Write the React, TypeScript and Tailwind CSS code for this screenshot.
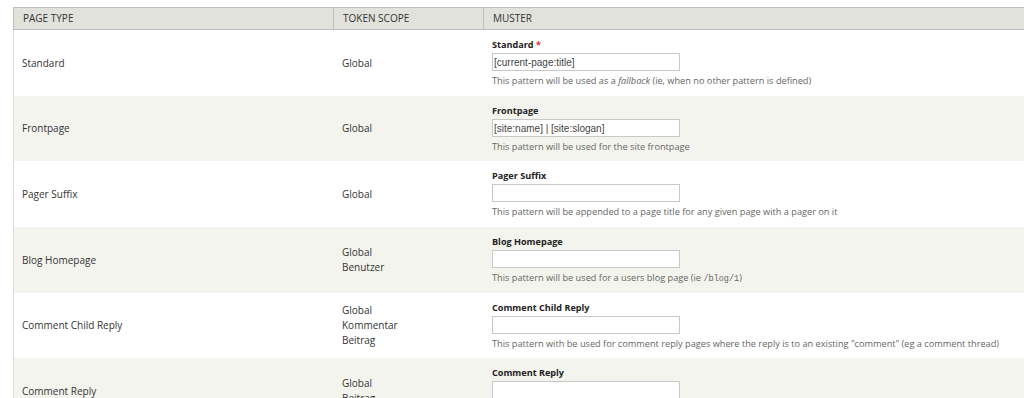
const rows = [
  {
    type: "Standard",
    scope: ["Global"],
    label: "Standard",
    required: true,
    value: "[current-page:title]",
    desc: (
      <>
        This pattern will be used as a <em>fallback</em> (ie, when no other pattern is defined)
      </>
    ),
    h: "h-[66px]",
  },
  {
    type: "Frontpage",
    scope: ["Global"],
    label: "Frontpage",
    value: "[site:name] | [site:slogan]",
    desc: <>This pattern will be used for the site frontpage</>,
    h: "h-[65px]",
  },
  {
    type: "Pager Suffix",
    scope: ["Global"],
    label: "Pager Suffix",
    value: "",
    desc: <>This pattern will be appended to a page title for any given page with a pager on it</>,
    h: "h-[66px]",
  },
  {
    type: "Blog Homepage",
    scope: ["Global", "Benutzer"],
    label: "Blog Homepage",
    value: "",
    desc: (
      <>
        This pattern will be used for a users blog page (ie{" "}
        <code className="font-['Liberation_Mono',monospace] text-[8.5px]">/blog/1</code>)
      </>
    ),
    h: "h-[66px]",
  },
  {
    type: "Comment Child Reply",
    scope: ["Global", "Kommentar", "Beitrag"],
    label: "Comment Child Reply",
    value: "",
    desc: (
      <>
        This pattern with be used for comment reply pages where the reply is to an existing
        "comment" (eg a comment thread)
      </>
    ),
    h: "h-[65px]",
  },
  {
    type: "Comment Reply",
    scope: ["Global", "Beitrag"],
    label: "Comment Reply",
    value: "",
    desc: <>This pattern will be used for comment reply pages</>,
    h: "h-[66px]",
  },
];

export default function App() {
  return (
    <div className="h-[398px] overflow-hidden bg-white pl-[13px] pt-[7px] font-['Open_Sans',sans-serif] text-[#333]">
      <table className="w-[1011px] table-fixed border-separate border-spacing-0">
        <colgroup>
          <col className="w-[320px]" />
          <col className="w-[150px]" />
          <col />
        </colgroup>
        <thead>
          <tr className="h-[23px] bg-[#e1e2dc] text-left text-[10px] font-normal uppercase">
            <th className="border-y border-l border-[#bebfb9] pl-[9px] font-normal">Page type</th>
            <th className="border-y border-l border-[#bebfb9] pl-[9px] font-normal">Token scope</th>
            <th className="border-y border-l border-[#bebfb9] pl-[9px] font-normal">Muster</th>
          </tr>
        </thead>
        <tbody>
          {rows.map((r, i) => (
            <tr key={r.type} className={i % 2 === 1 ? "bg-[#f3f4ee]" : "bg-white"}>
              <td className={`${r.h} border-l border-[#dcdcd6] pl-[8px] align-middle text-[10px]`}>
                {r.type}
              </td>
              <td className="pl-[9px] align-middle text-[10px] leading-[15px]">
                {r.scope.map((s) => (
                  <div key={s}>{s}</div>
                ))}
              </td>
              <td className="pl-[9px] align-top">
                <div className="pt-[8px]">
                  <div className="h-[13px] text-[9.1px] font-bold leading-[13px] text-[#222]">
                    {r.label}
                    {r.required && <span className="text-[#e03030]"> *</span>}
                  </div>
                  <div className="mt-[2px] flex h-[18px] w-[188px] items-center border border-[#c8c8c8] bg-white px-[1px] font-['Liberation_Sans',sans-serif] text-[10px] text-[#444]">
                    {r.value}
                  </div>
                  <div className="mt-[4px] h-[12px] whitespace-nowrap text-[9.2px] leading-[12px] text-[#666]">
                    {r.desc}
                  </div>
                </div>
              </td>
            </tr>
          ))}
        </tbody>
      </table>
    </div>
  );
}
